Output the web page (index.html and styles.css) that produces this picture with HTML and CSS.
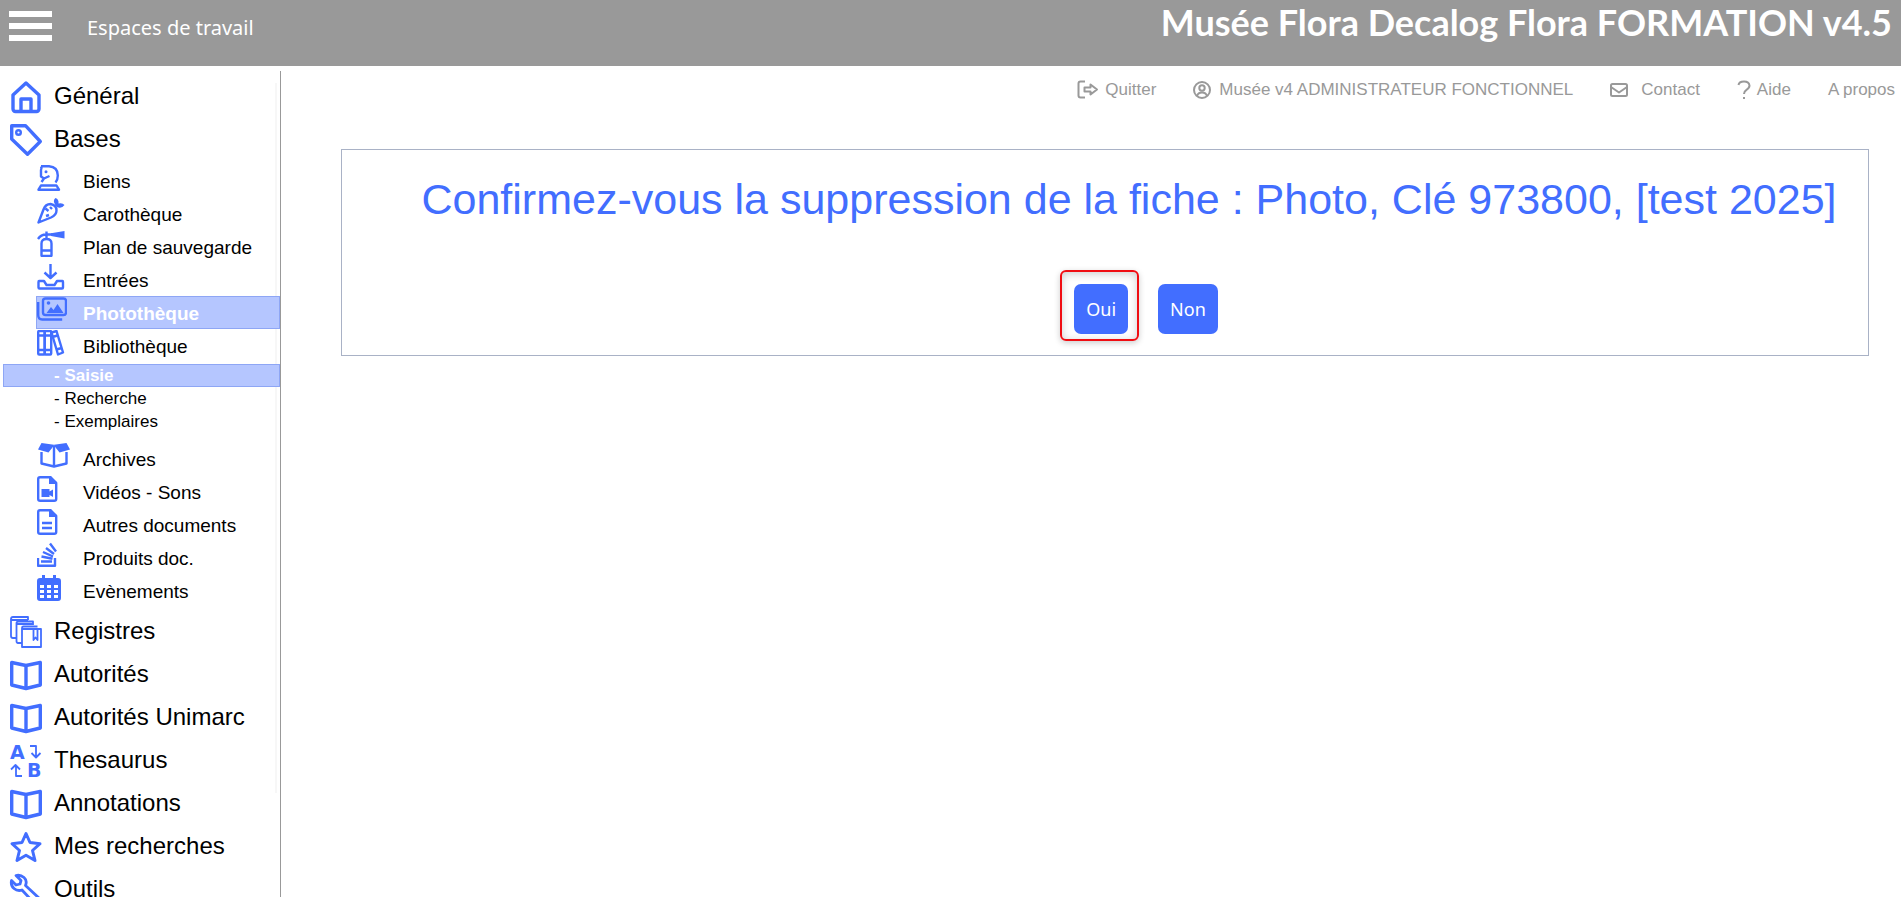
FILE: index.html
```html
<!DOCTYPE html>
<html lang="fr">
<head>
<meta charset="utf-8">
<title>Musée Flora Decalog Flora FORMATION v4.5</title>
<link rel="stylesheet" href="styles.css">
</head>
<body>
<svg class="sprite" aria-hidden="true">
  <symbol id="book" viewBox="0 0 32 32"><path d="M1.700 3.500L16 6.500l14.300-3v22.500L16 29.500l-14.300-3.500zM16 6.500v23" stroke-width="3.400"/></symbol>
</svg>
<header class="topbar">
  <button class="menu-button" type="button" aria-label="Menu"><span class="bar"></span><span class="bar"></span><span class="bar"></span></button>
  <a class="workspace" href="#">Espaces de travail</a>
  <h1 class="brand">Musée Flora Decalog Flora FORMATION v4.5</h1>
</header>
<div class="layout">
  <nav class="sidebar" aria-label="Navigation">
    <ul class="menu">
      <li><a class="item" href="#"><svg class="icon" viewBox="0 0 32 32"><path d="M3 14L16 2l13 12V28a2.500 2.500 0 0 1-2.500 2.500h-21a2.500 2.500 0 0 1-2.500-2.500zM11 30V18h10v12" stroke-width="3.400"/></svg>Général</a></li>
      <li><a class="item" href="#"><svg class="icon" viewBox="0 0 32 32"><path d="M1.700 1.700H15.500L30.300 17.500L17.500 30.300L1.700 15z" stroke-width="3.400"/><circle cx="8.500" cy="8.500" r="2.300" stroke-width="2.400"/></svg>Bases</a>
        <ul class="submenu">
          <li><a class="subitem" href="#"><svg class="subicon" viewBox="0 0 30 26"><path d="M4 1.300H12Q20.800 2 20.800 10.500Q20.800 15 18.500 17.500M4 1.300Q5 3 4 5V11.500l3 2L12.500 11M7 13.500L4.500 17M4 20.500h15.500l2.500 4.200H1.500z"/><circle class="solid" cx="9" cy="6.800" r="1.500"/></svg>Biens</a></li>
          <li><a class="subitem" href="#"><svg class="subicon" viewBox="0 0 30 26"><path d="M1.500 24.500L6.500 11.500q2-5.500 7-5.500q6 1 6 6.500q0 4.500-5.500 7zM8.500 10.500l3 2.500M13 9l2 2M9 18l3-1"/><path class="solid" d="M18 6.500q-2.500-4 .5-6.500q3.500 1 3 5.500q4-1 6 1.500q-2.500 3.500-6 2.500q-2.500-.5-3.500-3z"/></svg>Carothèque</a></li>
          <li><a class="subitem" href="#"><svg class="subicon" viewBox="0 0 30 26"><path d="M4.500 24.500V12.500q0-4.500 5-4.500t5 4.500v12q0 .5-1 .5H5.500q-1 0-1-.5zM5 19.500h9M9.500 8V0.500M1 8q3-4.500 8-4.500h6"/><path class="solid" d="M14 2.300L27.500 0v7.500L14 5z"/></svg>Plan de sauvegarde</a></li>
          <li><a class="subitem" href="#"><svg class="subicon" viewBox="0 0 30 26"><path d="M13.500 0v13M7.500 8.500l6 5.500l6-5.500M2 17h5l2.500 4h8l2.500-4h5.500q.5 0 .5 1v5.500q0 1-1 1H2.500q-1 0-1-1V18q0-1 .5-1z"/></svg>Entrées</a></li>
          <li><a class="subitem current" href="#" aria-current="page"><svg class="subicon" viewBox="0 0 30 26"><rect x="6" y="1.500" width="23" height="16.500" rx="2.500"/><path d="M1.200 5v13q0 4.500 4 4.500h20"/><path class="solid" d="M9.500 16l4.500-6l2.500 3l4-6l6 9z"/><circle class="solid" cx="11.500" cy="6" r="1.800"/></svg>Photothèque</a></li>
          <li><a class="subitem" href="#"><svg class="subicon" viewBox="0 0 30 26"><rect x="1.200" y="1" width="6.500" height="23.500" rx="1"/><rect x="7.700" y="1" width="6.500" height="23.500" rx="1"/><path d="M14.500 2.500l5-1.500l6.500 21.500l-5 2zM1 5.500h13M1 20h13M15.500 7l5-1.500M19.500 19.500l5-1.500"/></svg>Bibliothèque</a>
            <ul class="links">
              <li><a class="link current" href="#">- Saisie</a></li>
              <li><a class="link" href="#">- Recherche</a></li>
              <li><a class="link" href="#">- Exemplaires</a></li>
            </ul></li>
          <li><a class="subitem" href="#"><svg class="subicon wide" viewBox="0 0 34 26"><path d="M4.500 9v11.500L17 23.500l12.500-3V9M17 3v20" /><path class="solid" d="M4.500 0L17 1.800L29.500 0L33 6.500l-10.500 3L17 2.500l-5.500 7L1 6.500z"/></svg>Archives</a></li>
          <li><a class="subitem" href="#"><svg class="subicon" viewBox="0 0 30 26"><path d="M13 1.200H3Q1.200 1.200 1.200 3v20q0 1.800 2 1.800h14q2 0 2-1.800V7z"/><path class="solid" d="M12 0h2l6 6.500v1.500h-8zM4.500 13h8v2.500l3.500-2v7.500l-3.500-2V21h-8z"/></svg>Vidéos - Sons</a></li>
          <li><a class="subitem" href="#"><svg class="subicon" viewBox="0 0 30 26"><path d="M13 1.200H3Q1.200 1.200 1.200 3v20q0 1.800 2 1.800h14q2 0 2-1.800V7zM5 14h10M5 19h10"/><path class="solid" d="M12 0h2l6 6.500v1.500h-8z"/></svg>Autres documents</a></li>
          <li><a class="subitem" href="#"><svg class="subicon" viewBox="0 0 30 26"><path d="M1 16v7.800h17V16M4 19.500h11M4.500 14.500l11 2.200M6 10l10 4.500M9 6l8 6M13 1.500l6 8"/></svg>Produits doc.</a></li>
          <li><a class="subitem" href="#"><svg class="subicon" viewBox="0 0 30 26"><path class="solid" fill-rule="evenodd" d="M5 0h3v3h8V0h3v3h2q3 0 3 3v17q0 3-3 3H3q-3 0-3-3V6q0-3 3-3h2zM3 10v3h4v-3zM10 10v3h4v-3zM17 10v3h4v-3zM3 15v3h4v-3zM10 15v3h4v-3zM17 15v3h4v-3zM3 20v3h4v-3zM10 20v3h4v-3zM17 20v3h4v-3z"/></svg>Evènements</a></li>
        </ul></li>
      <li><a class="item" href="#"><svg class="icon" viewBox="0 0 32 32"><path d="M7 22H3q-2 0-2-2V3q0-2 2-2h15V4M12 27H8q-1.500 0-1.500-2V7q0-1.500 2-1.500h14.500V9M1 4h17M6.500 8h16M12 31V12q0-1.500 1.500-1.500h14M12 13h19v18H12V12M23.500 13v11l2-2.500l2 2.500V13" stroke-width="1.800"/></svg>Registres</a></li>
      <li><a class="item" href="#"><svg class="icon"><use href="#book"/></svg>Autorités</a></li>
      <li><a class="item" href="#"><svg class="icon"><use href="#book"/></svg>Autorités Unimarc</a></li>
      <li><a class="item" href="#"><svg class="icon" viewBox="0 0 32 32"><text class="letter" x="0" y="14">A</text><text class="letter" x="17" y="32">B</text><path d="M20 1h6v11M21.500 8l4.500 4.500L30.500 8M12 31H6V20M1 24.500L5.500 20l4.500 4.500" stroke-width="1.800"/></svg>Thesaurus</a></li>
      <li><a class="item" href="#"><svg class="icon"><use href="#book"/></svg>Annotations</a></li>
      <li><a class="item" href="#"><svg class="icon" viewBox="0 0 32 32"><path d="M16 2.500l4 9l10 1.200l-7.500 6.800l2.500 10l-9-5.200L7 29.500l2.500-10L2 12.700L12 11.500z" stroke-width="3"/></svg>Mes recherches</a></li>
      <li><a class="item" href="#"><svg class="icon" viewBox="0 0 32 32"><path d="M6 1.500l5 5l-1 3.500l-4 1l-4.500-4.500q-1 5 2.500 8t8 1.500L25 30q3 1.500 5-1q1.500-2.500-.5-4.500L15.500 11.500q2-5-1.500-8T6 1.500z" stroke-width="2.800"/></svg>Outils</a></li>
    </ul>
  </nav>
  <main class="content">
    <nav class="tools" aria-label="Compte">
      <a class="tool" href="#"><svg class="exit-icon" viewBox="0 0 22 20"><path d="M8 1.500H3.500q-2 0-2 2v12q0 2 2 2H8M7.500 7.500h6V4.500l6.500 5l-6.500 5v-3h-6z"/></svg>Quitter</a>
      <a class="tool roomy" href="#"><svg class="user-icon" viewBox="0 0 18 18"><circle cx="9" cy="9" r="8"/><circle cx="9" cy="7" r="2.700"/><path d="M4 15q1-3.500 5-3.500t5 3.500"/></svg>Musée v4 ADMINISTRATEUR FONCTIONNEL</a>
      <a class="tool spaced" href="#"><svg class="user-icon" viewBox="0 0 18 18"><rect x="1" y="3" width="16" height="12" rx="1.500"/><path d="M1 6l8 5.500L17 6"/></svg>Contact</a>
      <a class="tool" href="#"><svg class="help-icon" viewBox="0 0 14 20"><path d="M1.500 5q.5-3.500 5.500-3.500t5.500 4q0 2.500-3 4.300q-2.500 1.500-2.500 4.200M7 17v2"/></svg>Aide</a>
      <a class="tool" href="#">A propos</a>
    </nav>
    <form class="confirm">
      <h2 class="question">Confirmez-vous la suppression de la fiche : Photo, Clé 973800, [test 2025]</h2>
      <div class="actions">
        <span class="highlight"><button class="choice" type="button">Oui</button></span>
        <button class="choice" type="button">Non</button>
      </div>
    </form>
  </main>
</div>
</body>
</html>
```
FILE: styles.css
```css
* { box-sizing: border-box; }

body {
  margin: 0;
  height: 100vh;
  display: flex;
  flex-direction: column;
  overflow: hidden;
  background: #fff;
  color: #000;
  font-family: "Liberation Sans", Arial, sans-serif;
}

a { color: inherit; text-decoration: none; }
ul { list-style: none; margin: 0; padding: 0; }
svg { flex: none; fill: none; stroke: currentColor; stroke-width: 2; stroke-linejoin: round; }
button { border: 0; cursor: pointer; }

.sprite { position: absolute; width: 0; height: 0; }
.solid { fill: currentColor; stroke: none; }

/* Top bar */
.topbar {
  flex: none;
  display: flex;
  align-items: flex-start;
  height: 66px;
  padding: 0 9px;
  background: #999;
  color: #fff;
}
.menu-button {
  display: flex;
  flex-direction: column;
  gap: 6px;
  width: 43px;
  margin-top: 11px;
  padding: 0;
  background: none;
}
.bar { height: 6px; width: 100%; background: #fff; }
.workspace {
  margin-left: 35px;
  font-family: "Noto Sans", sans-serif;
  font-size: 20px;
  line-height: 56px;
}
.brand {
  margin: 0 0 0 auto;
  font-family: Lato, sans-serif;
  font-size: 36px;
  font-weight: 700;
  line-height: 44px;
}

.layout { flex: 1; display: flex; min-height: 0; padding-top: 5px; }

/* Sidebar */
.sidebar {
  flex: none;
  width: 281px;
  padding: 3px 0 0 3px;
  border-right: 1px solid #999;
  background: linear-gradient(#f7f7f7, #f7f7f7) right 3px top 12px / 2px 710px no-repeat;
  overflow: hidden;
}
.item {
  display: flex;
  align-items: center;
  gap: 12px;
  height: 43px;
  padding-left: 7px;
  font-size: 24px;
}
.icon { width: 32px; height: 32px; margin-top: 3px; color: #426eff; overflow: visible; }
.letter { font-family: "DejaVu Sans", sans-serif; font-size: 19px; font-weight: 700; fill: currentColor; stroke: none; }

.submenu { padding: 4px 0 2px 33px; }
.subitem {
  display: flex;
  align-items: flex-start;
  gap: 16px;
  height: 33px;
  border: 1px solid transparent;
  font-size: 19px;
  line-height: 33px;
}
.subicon { width: 30px; height: 26px; color: #426eff; stroke-width: 2.4px; }
.subicon.wide { width: 34px; margin-right: -4px; }
.current { background: #b5c6ff; border-color: #8ea6f5; color: #fff; font-weight: 700; }

.links { margin: 2px 0 9px -33px; }
.link {
  display: block;
  height: 23px;
  padding-left: 50px;
  border: 1px solid transparent;
  font-size: 17px;
  line-height: 21px;
}
.link.current { border-color: #8ea6f5; }

/* Content */
.content { flex: 1; min-width: 0; }
.tools {
  display: flex;
  justify-content: flex-end;
  gap: 37px;
  padding: 6px 6px 0 0;
  color: #999;
  font-size: 17px;
  line-height: 26px;
}
.tool { display: flex; align-items: center; gap: 6px; }
.roomy { gap: 8px; }
.spaced { gap: 13px; }
.exit-icon { width: 22px; height: 20px; }
.user-icon { width: 18px; height: 18px; }
.help-icon { width: 14px; height: 20px; }

.confirm {
  margin: 46px 32px 0 60px;
  padding: 26px 0 21px;
  border: 1px solid #a9b2c6;
}
.question {
  margin: 0;
  padding-left: 48px;
  color: #426eff;
  font-size: 43px;
  font-weight: 400;
  line-height: 46px;
  text-align: center;
}
.actions {
  display: flex;
  justify-content: center;
  gap: 30px;
  margin-top: 62px;
  padding-left: 82px;
}
.highlight { position: relative; }
.highlight::after {
  content: "";
  position: absolute;
  inset: -14px -11px -7px -14px;
  border: 2px solid #f00d12;
  border-radius: 6px;
  box-shadow: 0 2px 6px #0003, inset 0 2px 8px #0003;
  pointer-events: none;
}
.choice {
  display: block;
  height: 50px;
  padding: 0 12px;
  border-radius: 7px;
  background: #426eff;
  color: #fff;
  font-family: "Noto Sans", sans-serif;
  font-size: 18px;
}
```
